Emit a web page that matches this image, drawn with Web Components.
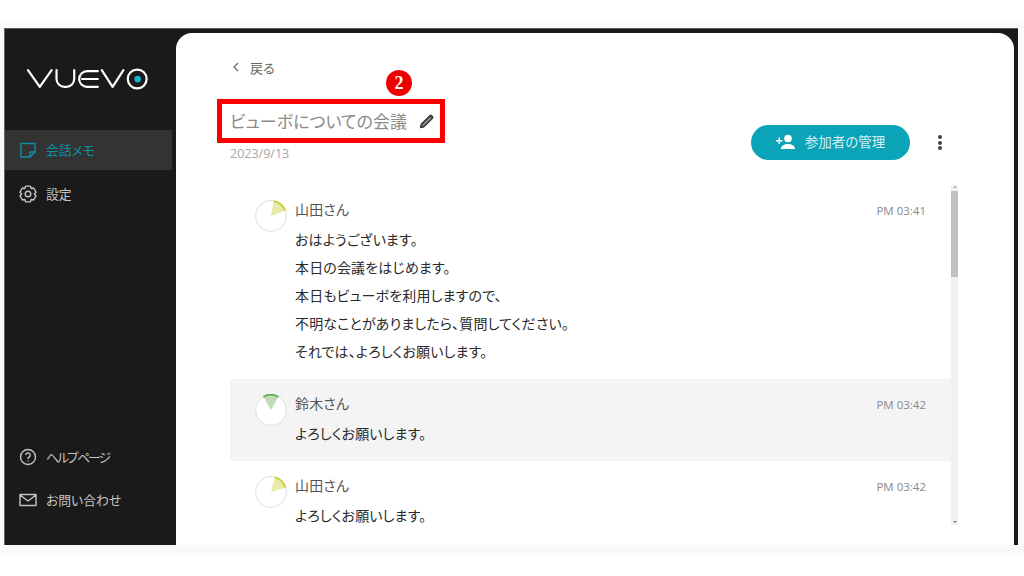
<!DOCTYPE html>
<html lang="ja"><head><meta charset="utf-8"><style>
html,body{margin:0;padding:0;background:#fff}
body{font-family:"Noto Sans CJK JP","Noto Sans",sans-serif}
</style></head><body>
<x-app>
<x-sidebar slot="side"></x-sidebar>
<x-main slot="main"></x-main>
</x-app>
<script>
const def=(n,html)=>customElements.define(n,class extends HTMLElement{constructor(){super();this.attachShadow({mode:'open'}).innerHTML=html(this)}});
const gear=()=>{let p=[];for(let i=0;i<6;i++){const c=i*60+30;[[-30,6.3],[-17,8.2],[17,8.2]].forEach(([o,r])=>{const a=(c+o)*Math.PI/180;p.push((9+r*Math.cos(a)).toFixed(2)+' '+(9+r*Math.sin(a)).toFixed(2))})}return 'M'+p.join('L')+'Z'};
def('x-app',()=>`<style>
:host{display:block;width:1024px;height:576px;overflow:hidden;background:#fff;padding-top:23px;box-sizing:border-box}
.band{background:#f9f9f9;height:530px;display:flex;flex-direction:column;padding-top:5px;box-sizing:border-box}
.win{margin:0 6px 0 4px;height:517px;background:#1a1a1a;display:flex;padding:4px 4px 0 0;box-sizing:border-box;border-left:1px solid #666;border-top:1px solid #555}
::slotted([slot=side]){width:171px;flex:none}
::slotted([slot=main]){flex:1;min-width:0}
</style><div class="band"><div class="win"><slot name="side"></slot><slot name="main"></slot></div></div>`);
def('x-nav',h=>`<style>
:host{display:flex;align-items:center;height:40px;padding-left:14px;gap:9px;color:#c4c4c4;font-size:12.800px;font-feature-settings:"palt";width:167px;box-sizing:border-box}
:host([active]){background:#333;color:#0e8fa3}
span{margin-top:-2px}
</style><slot name="i"></slot><span style="letter-spacing:${h.getAttribute('ls')||0}px"><slot></slot></span>`);
def('x-sidebar',()=>`<style>
:host{display:flex;flex-direction:column;color:#ccc;height:100%}
.logo{margin:31px 0 0 22px;height:30px;width:122px;display:block}
.top{margin-top:36px;display:flex;flex-direction:column;gap:4px}
.bot{margin-top:auto;margin-bottom:25px;display:flex;flex-direction:column;gap:3px}
svg.i{width:18px;height:18px;fill:none;stroke:currentColor;stroke-width:1.4;display:block;flex:none;stroke-linejoin:round}
</style>
<svg class="logo" viewBox="0 0 124 24" fill="none" stroke="#fff" stroke-width="2.2" stroke-linecap="round" stroke-linejoin="round">
<path d="M1 3l12 17 12-17"/><path d="M30 3v9a8 8 0 0 0 8 8h2a8 8 0 0 0 8-8V3"/>
<path d="M72 4H61a8 8 0 0 0 0 16h11M56 12h16"/><path d="M76 3l11 17 11-17"/>
<circle cx="112" cy="12" r="9.6"/><circle cx="112.500" cy="12" r="3.400" fill="#12b5cb" stroke="none"/></svg>
<div class="top">
<x-nav active><svg class="i" slot="i" viewBox="0 0 18 18"><path d="M2 2.500h14v8.500l-5 5H2zM16 11h-5v5"/></svg>会話メモ</x-nav>
<x-nav><svg class="i" slot="i" viewBox="0 0 18 18"><path d="${gear()}"/><circle cx="9" cy="9" r="2.800"/></svg>設定</x-nav>
</div>
<div class="bot">
<x-nav ls="-1.900"><svg class="i" slot="i" viewBox="0 0 18 18"><circle cx="9" cy="9" r="7.500"/><path d="M6.800 7a2.200 2.200 0 1 1 3.400 1.900c-.8.500-1.200 1-1.200 2"/><path d="M9 12.400v1.200"/></svg>ヘルプページ</x-nav>
<x-nav><svg class="i" slot="i" viewBox="0 0 18 18"><path d="M1 3.500h16v11H1zM1 4l8 6 8-6"/></svg>お問い合わせ</x-nav>
</div>`);
def('x-msg',h=>{const c=h.getAttribute('color'),a=+h.getAttribute('dir');const name=h.getAttribute('name'),t=h.getAttribute('time');
const pt=(deg,r)=>{const d=deg*Math.PI/180;return (16+r*Math.sin(d)).toFixed(2)+' '+(16-r*Math.cos(d)).toFixed(2)};
const s=a,e=a+59;
return `<style>
:host{display:grid;grid-template-columns:65px 1fr auto;grid-template-rows:24px auto;align-content:start;padding:13px 25px 0 0;box-sizing:border-box;color:#222;font-size:14px;font-feature-settings:"palt";letter-spacing:.15px}
:host([shade]){background:#f4f4f4}
.av{grid-row:1/3;padding:2px 0 0 25px}
svg{display:block;width:32px;height:32px}
.n{color:#555;line-height:22px;height:22px}
.t{color:#8a8a8a;font-size:11.500px;letter-spacing:0;line-height:26px;font-family:"Open Sans","Noto Sans",sans-serif;margin-left:1px}
.b{grid-column:2/4;line-height:28px;color:#2a2a2a;margin-top:3px}
</style>
<div class="av"><svg viewBox="0 0 32 32"><circle cx="16" cy="16" r="15.300" fill="#fff" stroke="#e4e4e4" stroke-width="1.200"/>
<path d="M16 16L${pt(s,15)}A15 15 0 0 1 ${pt(e,15)}Z" fill="${c}" fill-opacity=".42"/>
<path d="M${pt(s,15.200)}A15.200 15.200 0 0 1 ${pt(e,15.200)}" fill="none" stroke="${c}" stroke-width="1.800"/></svg></div>
<div class="n">${name}</div><div class="t">${t}</div><div class="b"><slot></slot></div>`});
def('x-main',()=>`<style>
:host{display:flex;flex-direction:column;background:#fff;border-radius:16px 16px 0 0;height:100%;position:relative;padding:0 0 0 54px;box-sizing:border-box}
.back{display:flex;align-items:center;gap:10px;padding-left:2px;color:#666;font-size:13px;margin-top:23px;height:22px;font-feature-settings:"palt";flex:none}
.back svg{width:8px;height:10px;fill:none;stroke:#666;stroke-width:1.200}
.head{display:flex;align-items:flex-end;margin-top:30px;padding-right:72px;flex:none}
.title{flex:1;min-width:0}
.tt{display:flex;align-items:center;gap:12px;color:#8b8b8b;font-size:17px;line-height:26px;font-feature-settings:"palt"}
.tt svg{width:16px;height:16px;flex:none}
.date{color:#a6a6a6;font-size:12.500px;line-height:16px;margin-top:12px;font-family:"Open Sans",sans-serif}
.btn{display:flex;align-items:center;justify-content:center;gap:9px;width:159px;height:35px;border-radius:18px;background:#0ba3b8;color:#d5f0f4;font-size:13.500px;font-feature-settings:"palt";margin-bottom:2px}
.btn span{margin-top:-3px}
.btn svg{width:20px;height:16px;fill:#fff;margin-top:-2px}
.more{width:4px;margin:0 0 12px 28px;display:flex;flex-direction:column;gap:1.500px}
.more i{width:4px;height:4px;border-radius:50%;background:#444}
.listwrap{margin-top:23px;margin-right:56px;display:flex;flex:none}
.list{flex:1;min-width:0;display:flex;flex-direction:column;height:340px;overflow:hidden}
.sb{width:7px;height:340px;background:#f1f1f1;display:flex;flex-direction:column;flex:none;align-items:center}
.sb b{display:block;width:7px;height:86px;background:#c1c1c1;margin-bottom:auto}
.up,.dn{width:0;height:0;border:2px solid transparent;flex:none}
.up{border-bottom:2px solid #aaa;border-top:0;margin:1px 0 3px}
.dn{border-top:2px solid #777;border-bottom:0;margin:0 0 2px}
.red{position:absolute;left:41px;top:66px;width:228px;height:44px;border:5px solid #f00;box-sizing:border-box}
.badge{position:absolute;left:210px;top:37px;width:26px;height:26px;border-radius:50%;background:#e00;color:#fff;font:700 18px/26px "Liberation Serif",serif;text-align:center}
x-msg{flex:none}
x-msg.a{height:194px}x-msg.b{height:82px}x-msg.c{height:66px}
</style>
<div class="back"><svg viewBox="0 0 8 10"><path d="M6 1L2 5l4 4"/></svg><span>戻る</span></div>
<div class="head"><div class="title"><div class="tt"><span>ビューボについての会議</span><svg viewBox="0 0 16 16"><path d="M2.200 11.200L10.800 2.600a1.300 1.300 0 0 1 1.800 0l.9.900a1.300 1.300 0 0 1 0 1.800L4.900 13.900 1.400 14.700z" fill="#555" stroke="#333" stroke-width="1.100" stroke-linejoin="round"/><path d="M4 12.300L11.500 4.800" stroke="#ddd" stroke-width=".9"/></svg></div><div class="date">2023/9/13</div></div>
<div class="btn"><svg viewBox="0 0 20 16"><circle cx="12" cy="4.500" r="3.800"/><path d="M5 15c0-3.500 3.500-5 7-5s7 1.500 7 5zM0 6h2.500V3.500h1.500V6h2.500v1.500H4V10H2.500V7.500H0z"/></svg><span>参加者の管理</span></div>
<div class="more"><i></i><i></i><i></i></div></div>
<div class="listwrap"><div class="list">
<x-msg class="a" name="山田さん" time="PM 03:41" color="#c8cc2a" dir="10">おはようございます。<br>本日の会議をはじめます。<br>本日もビューボを利用しますので、<br>不明なことがありましたら、質問してください。<br>それでは、よろしくお願いします。</x-msg>
<x-msg class="b" shade name="鈴木さん" time="PM 03:42" color="#6aab4f" dir="-30">よろしくお願いします。</x-msg>
<x-msg class="c" name="山田さん" time="PM 03:42" color="#c8cc2a" dir="14">よろしくお願いします。</x-msg>
</div><div class="sb"><i class="up"></i><b></b><i class="dn"></i></div></div>
<div class="red"></div><div class="badge">2</div>`);
</script></body></html>
